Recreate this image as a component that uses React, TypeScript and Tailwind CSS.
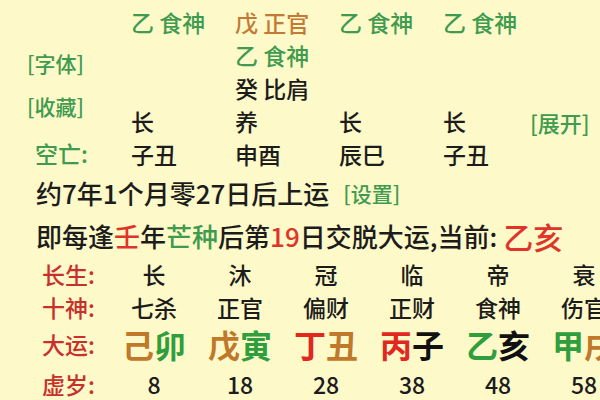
import React from 'react';

type Seg = { t: string; c: string };

const GREEN = 'text-[#3f9b4f]';
const BROWN = 'text-[#c47a34]';
const BLACK = 'text-[#1c1c1c]';

// 四柱的上半部分：藏干 / 长生 / 空亡
const topRows: (Seg | null)[][] = [
  [{ t: '乙 食神', c: GREEN }, { t: '戊 正官', c: BROWN }, { t: '乙 食神', c: GREEN }, { t: '乙 食神', c: GREEN }],
  [null, { t: '乙 食神', c: GREEN }, null, null],
  [null, { t: '癸 比肩', c: BLACK }, null, null],
  [{ t: '长', c: BLACK }, { t: '养', c: BLACK }, { t: '长', c: BLACK }, { t: '长', c: BLACK }],
  [{ t: '子丑', c: BLACK }, { t: '申酉', c: BLACK }, { t: '辰巳', c: BLACK }, { t: '子丑', c: BLACK }],
];

const changSheng = ['长', '沐', '冠', '临', '帝', '衰'];
const shiShen = ['七杀', '正官', '偏财', '正财', '食神', '伤官'];
const xuSui = ['8', '18', '28', '38', '48', '58'];

const RED = 'text-[#e0281e]';
const DGREEN = 'text-[#2f9e3c]';
const DBROWN = 'text-[#c0782a]';
const DBLACK = 'text-[#111111]';

const daYun: Seg[][] = [
  [{ t: '己', c: DBROWN }, { t: '卯', c: DGREEN }],
  [{ t: '戊', c: DBROWN }, { t: '寅', c: DGREEN }],
  [{ t: '丁', c: RED }, { t: '丑', c: DBROWN }],
  [{ t: '丙', c: RED }, { t: '子', c: DBLACK }],
  [{ t: '乙', c: DGREEN }, { t: '亥', c: DBLACK }],
  [{ t: '甲', c: DGREEN }, { t: '戌', c: DBROWN }],
];

const Label = ({ text }: { text: string }) => (
  <div className="w-[111px] shrink-0 pl-[42px] text-[23px] text-[#c8302c]">{text}</div>
);

export default function App() {
  return (
    <div className="w-[600px] h-[400px] overflow-hidden bg-[#fdf9c9] font-['Noto_Sans_CJK_SC','Noto_Sans',sans-serif] font-medium leading-none">
      <div className="flex flex-col pt-[6px]">
        {/* 上半部分 */}
        <div className="flex">
          <div className="w-[131px] shrink-0 flex flex-col text-[21px] text-[#3f9b4f] pl-[27px]">
            <div className="mt-[43px] h-[28px] flex items-center">[字体]</div>
            <div className="mt-[15px] h-[28px] flex items-center">[收藏]</div>
            <div className="mt-[19px] h-[28px] flex items-center pl-[8px] text-[23px]">空亡:</div>
          </div>
          <div className="flex flex-col">
            {topRows.map((row, i) => (
              <div key={i} className="flex h-[33px] items-center text-[23px]">
                {row.map((cell, j) => (
                  <div key={j} className={`w-[104px] shrink-0 ${cell ? cell.c : ''}`}>
                    {cell ? cell.t : ''}
                  </div>
                ))}
                {i === 3 && <div className="text-[22px] text-[#3f9b4f] ml-[-17px]">[展开]</div>}
              </div>
            ))}
          </div>
        </div>

        {/* 起运信息 */}
        <div className="h-[44px] flex items-center pl-[36px] text-[26px] text-[#1c1c1c]">
          约7年1个月零27日后上运
          <span className="ml-[14px] text-[21px] text-[#3f9b4f]">[设置]</span>
        </div>
        <div className="h-[42px] flex items-center pl-[36px] text-[26px] text-[#1c1c1c] whitespace-nowrap">
          即每逢<span className="text-[#e0342a]">壬</span>年<span className="text-[#3f9b4f]">芒种</span>后第
          <span className="text-[#e0342a]">19</span>日交脱大运,当前:
          <span className="ml-[6px] text-[30px] text-[#e0342a]">乙亥</span>
        </div>

        {/* 大运表 */}
        <div className="flex h-[34px] items-center">
          <Label text="长生:" />
          {changSheng.map((s, i) => (
            <div key={i} className="w-[86px] shrink-0 text-center text-[23px] text-[#1c1c1c]">{s}</div>
          ))}
        </div>
        <div className="flex h-[32px] items-center">
          <Label text="十神:" />
          {shiShen.map((s, i) => (
            <div key={i} className="w-[86px] shrink-0 text-center text-[23px] text-[#1c1c1c]">{s}</div>
          ))}
        </div>
        <div className="flex h-[42px] items-center">
          <Label text="大运:" />
          {daYun.map((pair, i) => (
            <div key={i} className="w-[86px] shrink-0 text-center text-[32px] font-bold whitespace-nowrap">
              {pair.map((p, j) => (
                <span key={j} className={p.c}>{p.t}</span>
              ))}
            </div>
          ))}
        </div>
        <div className="flex h-[38px] items-center">
          <Label text="虚岁:" />
          {xuSui.map((s, i) => (
            <div key={i} className="w-[86px] shrink-0 text-center text-[23px] text-[#1c1c1c]">{s}</div>
          ))}
        </div>
      </div>
    </div>
  );
}
